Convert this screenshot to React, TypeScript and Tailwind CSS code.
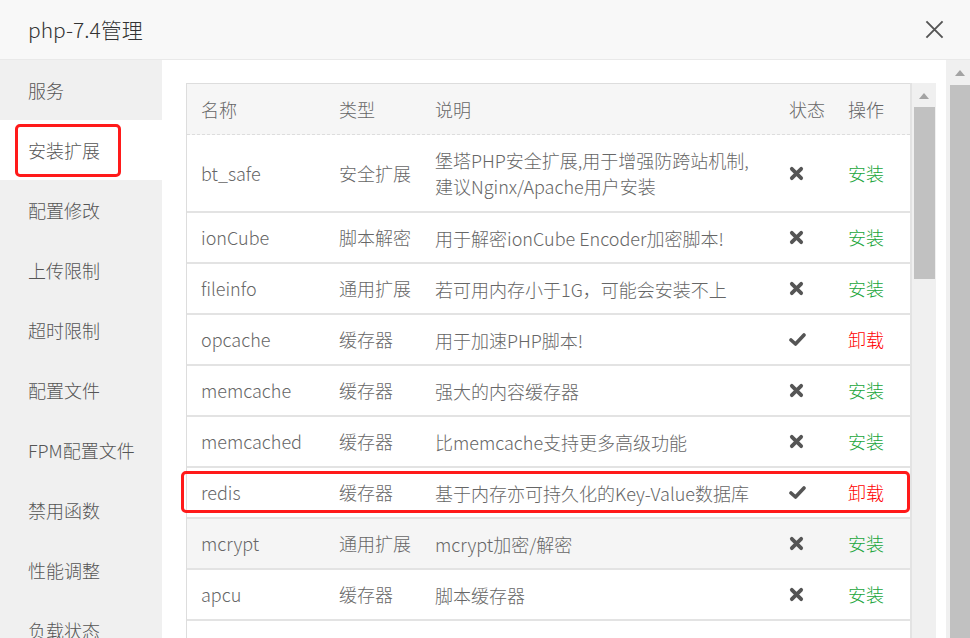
import React from 'react';

type Ext = {
  name: string;
  type: string;
  desc: string[];
  installed: boolean;
  hover?: boolean;
  marked?: boolean;
};

const exts: Ext[] = [
  { name: 'bt_safe', type: '安全扩展', desc: ['堡塔PHP安全扩展,用于增强防跨站机制,', '建议Nginx/Apache用户安装'], installed: false },
  { name: 'ionCube', type: '脚本解密', desc: ['用于解密ionCube Encoder加密脚本!'], installed: false },
  { name: 'fileinfo', type: '通用扩展', desc: ['若可用内存小于1G，可能会安装不上'], installed: false },
  { name: 'opcache', type: '缓存器', desc: ['用于加速PHP脚本!'], installed: true },
  { name: 'memcache', type: '缓存器', desc: ['强大的内容缓存器'], installed: false },
  { name: 'memcached', type: '缓存器', desc: ['比memcache支持更多高级功能'], installed: false },
  { name: 'redis', type: '缓存器', desc: ['基于内存亦可持久化的Key-Value数据库'], installed: true, marked: true },
  { name: 'mcrypt', type: '通用扩展', desc: ['mcrypt加密/解密'], installed: false, hover: true },
  { name: 'apcu', type: '缓存器', desc: ['脚本缓存器'], installed: false },
  { name: '', type: '', desc: [''], installed: false },
];

const menu = ['服务', '安装扩展', '配置修改', '上传限制', '超时限制', '配置文件', 'FPM配置文件', '禁用函数', '性能调整', '负载状态'];

const font = { fontFamily: '"Noto Sans CJK SC", "Noto Sans", sans-serif' };

function Cross() {
  return (
    <svg width="15" height="15" viewBox="0 0 16 16">
      <path d="M3 3 L13 13 M13 3 L3 13" stroke="#555" strokeWidth="4" strokeLinecap="round" />
    </svg>
  );
}

function Check() {
  return (
    <svg width="17" height="15" viewBox="0 0 17 15">
      <path d="M2 8 L6.5 12 L15 3" stroke="#555" strokeWidth="3.6" strokeLinecap="round" strokeLinejoin="round" fill="none" />
    </svg>
  );
}

function Arrow() {
  return (
    <svg width="10" height="6" viewBox="0 0 10 6">
      <path d="M0 6 L5 0 L10 6 Z" fill="#a3a3a3" />
    </svg>
  );
}

const cols = 'grid grid-cols-[138px_96px_354px_59px_1fr] items-center';

export default function App() {
  return (
    <div className="h-[638px] w-[970px] overflow-hidden bg-white font-light text-[#666]" style={font}>
      <div className="flex h-[60px] items-center justify-between border-b border-[#e9e9e9] bg-[#f8f8f8] pl-[28px] pr-[26px]">
        <span className="text-[21px] text-[#333]">php-7.4管理</span>
        <svg width="19" height="19" viewBox="0 0 20 20">
          <path d="M1.5 1.5 L18.5 18.5 M18.5 1.5 L1.5 18.5" stroke="#555" strokeWidth="2" />
        </svg>
      </div>

      <div className="flex h-[578px]">
        <div className="relative w-[162px] shrink-0 bg-[#f0f0f0]">
          {menu.map((m, i) => (
            <div
              key={m}
              className={`flex h-[60px] items-center pl-[28px] text-[18px] text-[#555] ${i === 1 ? 'bg-white' : ''}`}
            >
              {m}
            </div>
          ))}
          <div className="pointer-events-none absolute left-[15px] top-[64px] h-[53px] w-[106px] rounded-[5px] border-[3px] border-[#ff1a1a]" />
        </div>

        <div className="flex flex-1 pl-[24px] pr-[10px] pt-[23px]">
          <div className="flex-1 border-l border-t border-[#ddd]">
            <div className={`${cols} h-[51px] border-b border-dashed border-[#ddd] bg-[#f6f6f6] px-[14px] text-[18px]`}>
              <span>名称</span>
              <span>类型</span>
              <span>说明</span>
              <span>状态</span>
              <span>操作</span>
            </div>
            {exts.map((e, i) => (
              <div
                key={i}
                className={`relative ${cols} border-b-2 border-[#e3e3e3] px-[14px] text-[18px] ${i === 0 ? 'h-[78px]' : 'h-[51px]'} ${e.hover ? 'bg-[#f5f5f5]' : ''}`}
              >
                <span>{e.name}</span>
                <span>{e.type}</span>
                <span className="leading-[26px]">
                  {e.desc.map((d) => (
                    <span key={d} className="block whitespace-nowrap">{d}</span>
                  ))}
                </span>
                <span>{e.name && (e.installed ? <Check /> : <Cross />)}</span>
                <span className={e.installed ? 'text-[#ff0000]' : 'text-[#20a53a]'}>
                  {e.name && (e.installed ? '卸载' : '安装')}
                </span>
                {e.marked && (
                  <div className="pointer-events-none absolute -left-[6px] right-0 top-[3px] h-[42px] rounded-[5px] border-[3px] border-[#ff1a1a]" />
                )}
              </div>
            ))}
          </div>

          <div className="flex w-[26px] flex-col border-l-2 border-[#e3e3e3] bg-[#f0f0f0]">
            <div className="flex h-[24px] items-center justify-center pt-[2px]">
              <Arrow />
            </div>
            <div className="mx-auto h-[172px] w-[21px] bg-[#c1c1c1]" />
          </div>
        </div>

        <div className="flex w-[24px] flex-col bg-[#f0f0f0]">
          <div className="flex h-[25px] items-center justify-center pl-[4px]">
            <Arrow />
          </div>
          <div className="ml-[4px] flex-1 bg-[#c1c1c1]" />
        </div>
      </div>
    </div>
  );
}
